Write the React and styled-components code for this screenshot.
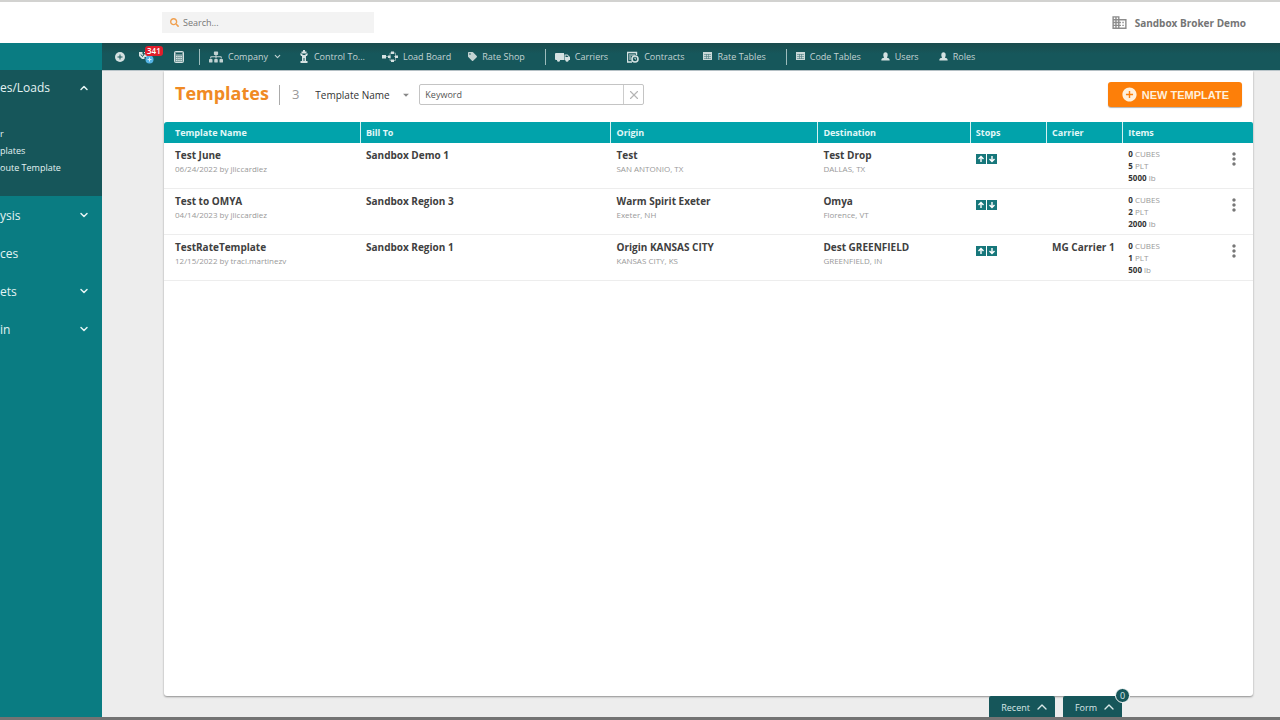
import styled, { createGlobalStyle } from "styled-components";
import { FaSearch, FaSitemap, FaTag } from "react-icons/fa";
import {
  MdAddCircle,
  MdArrowDropDown,
  MdBusiness,
  MdMoreVert,
} from "react-icons/md";
import { ChevronDown, ChevronUp, X } from "lucide-react";

const GlobalStyle = createGlobalStyle`
  * {
    box-sizing: border-box;
  }
  body {
    margin: 0;
    font-family: "Open Sans", "Noto Sans", sans-serif;
    color: #333;
  }
  button, input, select {
    font-family: inherit;
    margin: 0;
  }
  svg {
    display: block;
    flex-shrink: 0;
  }
`;

const Page = styled.div`
  display: flex;
  flex-direction: column;
  height: 100vh;
  overflow: hidden;
  background-color: #ededed;
  border-top: 2px solid #d2d2d0;
  border-bottom: 3px solid #737373;
`;
const TopBar = styled.header`
  display: flex;
  align-items: center;
  justify-content: space-between;
  flex-shrink: 0;
  height: 41px;
  padding: 0 34px 0 162px;
  background-color: #fff;
`;
const SearchBox = styled.label`
  display: flex;
  align-items: center;
  gap: 4px;
  width: 212px;
  height: 21px;
  padding: 0 8px;
  background-color: #f3f3f3;
  color: #f0a050;
`;
const SearchInput = styled.input`
  flex: 1;
  min-width: 0;
  padding: 0;
  border: 0;
  background: transparent;
  font-size: 9px;
  color: #555;
  outline: none;
  &::placeholder {
    color: #777;
    opacity: 1;
  }
`;
const Account = styled.div`
  display: flex;
  align-items: center;
  gap: 7px;
  font-size: 10px;
  font-weight: 700;
  color: #757575;
  svg {
    color: #8c8c8c;
  }
`;
const Body = styled.div`
  display: flex;
  flex: 1;
  min-height: 0;
`;
const Sidebar = styled.aside`
  width: 102px;
  flex-shrink: 0;
  padding-top: 27px;
  background-color: #0a7c82;
  color: #e4f3f3;
`;
const OpenSection = styled.section`
  height: 126px;
  background-color: #16565a;
`;
const SideButton = styled.button`
  display: flex;
  align-items: center;
  justify-content: space-between;
  width: 100%;
  height: ${(props) => (props.$open ? 35 : 38)}px;
  padding: 0 12px 0 0;
  border: 0;
  background: transparent;
  color: inherit;
  font-size: 12px;
  text-align: left;
  cursor: pointer;
`;
const SubLinks = styled.nav`
  display: flex;
  flex-direction: column;
  padding-top: 20px;
`;
const SubLink = styled.a`
  font-size: 9px;
  line-height: 17px;
  color: #e4f3f3;
  text-decoration: none;
  white-space: nowrap;
`;
const Main = styled.main`
  display: flex;
  flex-direction: column;
  flex: 1;
  min-width: 0;
`;
const NavBar = styled.nav`
  display: flex;
  align-items: center;
  flex-shrink: 0;
  height: 27px;
  padding-left: 12px;
  background: linear-gradient(#1a4b4d, #16575b 40%);
  color: #d5e2e2;
`;
const IconButton = styled.button`
  position: relative;
  display: flex;
  align-items: center;
  justify-content: ${(props) => props.$align || "center"};
  width: ${(props) => props.$width || 12}px;
  height: ${(props) => props.$height || 18}px;
  padding: 0;
  border: 0;
  background: transparent;
  color: inherit;
  cursor: pointer;
`;
const Badge = styled.span`
  position: absolute;
  top: -2px;
  left: 6px;
  padding: 0 2px;
  border-radius: 3px;
  background-color: #e01e2b;
  color: #fff;
  font-size: 8px;
  font-weight: 600;
  line-height: 10px;
`;
const IconGroup = styled.div`
  display: flex;
  gap: 13px;
  padding-right: 14px;
`;
const NavGroup = styled.div`
  display: flex;
  align-items: center;
  gap: ${(props) => props.$gap}px;
  height: 16px;
  padding: 0 20px 0 9px;
  border-left: 1px solid #9dbcbc;
`;
const NavLink = styled.a`
  display: flex;
  align-items: center;
  gap: 5px;
  color: #c3d3d3;
  font-size: 9px;
  line-height: 12px;
  text-decoration: none;
  white-space: nowrap;
`;
const Content = styled.div`
  display: flex;
  flex-direction: column;
  flex: 1;
  min-height: 0;
  padding: 0 27px 0 62px;
  border-top: 1px solid #b9c4c9;
`;
const Panel = styled.section`
  flex: 1;
  min-height: 0;
  border-radius: 0 0 3px 3px;
  background-color: #fff;
  box-shadow: 0 1px 2px rgba(0, 0, 0, 0.4);
`;
const Toolbar = styled.div`
  display: flex;
  align-items: center;
  height: 51px;
  padding: 0 11px 4px;
`;
const Title = styled.h1`
  margin: 0;
  padding: 0 10px 4px 0;
  border-right: 1px solid #aaa;
  font-size: 18px;
  line-height: 16px;
  color: #f08a24;
`;
const Count = styled.span`
  padding: 0 16px 2px 12px;
  font-size: 13px;
  line-height: 18px;
  color: #999;
`;
const SelectWrap = styled.label`
  display: flex;
  align-items: center;
  justify-content: space-between;
  width: 98px;
  margin-right: 6px;
  color: #888;
`;
const Select = styled.select`
  flex: 1;
  min-width: 0;
  padding: 0;
  border: 0;
  appearance: none;
  background: transparent;
  font-size: 10px;
  color: #333;
  outline: none;
`;
const KeywordBox = styled.div`
  display: flex;
  width: 225px;
  height: 21px;
  border: 1px solid #c4c4c4;
  border-radius: 2px;
`;
const KeywordInput = styled.input`
  flex: 1;
  min-width: 0;
  padding: 0 5px;
  border: 0;
  background: transparent;
  font-size: 9px;
  outline: none;
  &::placeholder {
    color: #555;
    opacity: 1;
  }
`;
const ClearButton = styled.button`
  display: flex;
  align-items: center;
  justify-content: center;
  width: 20px;
  padding: 0;
  border: 0;
  border-left: 1px solid #ccc;
  background: transparent;
  color: #b5b5b5;
  cursor: pointer;
`;
const NewButton = styled.button`
  display: flex;
  align-items: center;
  gap: 4px;
  height: 25px;
  margin-left: auto;
  padding: 0 13px;
  border: 0;
  border-radius: 3px;
  background-color: #fd7f09;
  box-shadow: 0 1px 1px rgba(0, 0, 0, 0.3);
  color: #fff0dc;
  font-family: "Liberation Sans", Arial, sans-serif;
  font-size: 11px;
  font-weight: bold;
  cursor: pointer;
`;
const Table = styled.table`
  width: 100%;
  table-layout: fixed;
  border-collapse: separate;
  border-spacing: 0;
`;
const Th = styled.th`
  width: ${(props) => props.$width};
  height: 21px;
  padding: 0 0 0 ${(props) => (props.$first ? 11 : 5)}px;
  border-left: ${(props) => (props.$first ? 0 : 1)}px solid #d5f1f1;
  background-color: #01a3ab;
  color: #e3f8f8;
  font-size: 9px;
  line-height: 12px;
  text-align: left;
  &:first-child {
    border-top-left-radius: 3px;
  }
  &:last-child {
    border-top-right-radius: 2px;
  }
`;
const Td = styled.td`
  height: 46px;
  padding: 5px 0 0 ${(props) => (props.$first ? 11 : 6)}px;
  border-bottom: 1px solid #ededed;
  vertical-align: top;
  white-space: nowrap;
`;
const Name = styled.div`
  font-size: 10px;
  font-weight: 700;
  line-height: 15px;
  color: #404040;
`;
const Detail = styled.div`
  font-size: 8px;
  line-height: 12px;
  color: #999;
`;
const Stops = styled.div`
  display: flex;
  gap: 1px;
  padding-top: 6px;
`;
const ItemsCell = styled.div`
  display: flex;
  justify-content: space-between;
  padding-right: 11px;
`;
const Amount = styled.b`
  color: #333;
`;
const BottomTabs = styled.footer`
  display: flex;
  justify-content: flex-end;
  gap: 8px;
  height: 21px;
  margin-right: 131px;
`;
const BottomTab = styled.button`
  position: relative;
  display: flex;
  align-items: center;
  gap: 4px;
  padding: 1px 5px 0 12px;
  border: 0;
  border-radius: 2px 2px 0 0;
  background-color: #16565a;
  color: #d9e8e8;
  font-size: 9px;
  cursor: pointer;
`;
const TabCount = styled.span`
  position: absolute;
  top: -8px;
  right: -8px;
  width: 15px;
  height: 15px;
  border: 1px solid #fff;
  border-radius: 50%;
  background-color: #16565a;
  font-size: 9px;
  line-height: 13px;
  text-align: center;
`;

function AddIcon() {
  return (
    <svg width="10" height="10" viewBox="0 0 10 10">
      <circle cx="5" cy="5" r="5" fill="#d5e2e2" />
      <path d="M5 2.5v5M2.5 5h5" stroke="#16575b" strokeWidth="1" />
    </svg>
  );
}

function InboxIcon() {
  return (
    <svg width="17" height="14" viewBox="0 0 17 14">
      <path d="M0 2h3.5v2l2 1V9H3L0 6z" fill="#d5e2e2" />
      <path d="M5 2h3v5H5z" fill="#d5e2e2" />
      <path d="M2 4.5l1.5 2L6 3" stroke="#16575b" fill="none" />
      <circle cx="10.500" cy="9.500" r="4" fill="#56b4e6" />
      <path d="M8.500 9.500h4M10.500 7.500v4" stroke="#d9f1ff" />
    </svg>
  );
}

function CalculatorIcon() {
  return (
    <svg width="10" height="12" viewBox="0 0 10 12">
      <rect x="0.500" y="0.500" width="9" height="11" rx="1" fill="#7fa1a2" stroke="#d5e2e2" />
      <path d="M2 2.500h6" stroke="#16575b" strokeWidth="1.400" />
      <path
        d="M2 5.500h6M2 7.500h6M2 9.500h6"
        stroke="#d5e2e2"
        strokeWidth="1.200"
        strokeDasharray="1.500 0.700"
      />
    </svg>
  );
}

function TowerIcon() {
  return (
    <svg width="10" height="13" viewBox="0 0 10 13" fill="#d5e2e2">
      <path d="M4 0h2v1.500h1.500V3h-5V1.500H4zM1 3.500h8L8 6H2zM3 6h4v5h1.500v2h-7v-2H3z" />
      <path d="M3.500 4h3v1h-3zM4.500 8h1v3h-1z" fill="#16575b" />
    </svg>
  );
}

function LoadBoardIcon() {
  return (
    <svg width="16" height="12" viewBox="0 0 16 12">
      <path d="M4 5.500h3M9 2H8v7.500h2M12 5.500h2M11 2h2.500v7.500H11" fill="none" stroke="#7fa1a2" />
      <path
        d="M0 4h4v3.500H0zM6 4.500h2.500v2.500H6zM9 .5h3V3H9zM9 8.500h3V11H9zM13 4.500h3v2.500h-3z"
        fill="#d5e2e2"
      />
    </svg>
  );
}

function TruckIcon() {
  return (
    <svg width="15" height="10" viewBox="0 0 15 10" fill="#d5e2e2">
      <path d="M1 1h8v7H1a1 1 0 0 1-1-1V2a1 1 0 0 1 1-1zM9.500 2.500h3L15 5v3H9.500z" />
      <path d="M10.500 3.500h1.700L13.500 5h-3z" fill="#16575b" />
      <circle cx="3.500" cy="8.300" r="1.500" />
      <circle cx="12" cy="8.300" r="1.500" />
    </svg>
  );
}

function ContractIcon() {
  return (
    <svg width="12" height="12" viewBox="0 0 12 12" fill="none" stroke="#d5e2e2">
      <path d="M9.500 4V1.500h-9v9.500H5M.5 1.500h9" strokeWidth="1.400" />
      <path d="M2 4h6M2 6h2M2 8h2" />
      <circle cx="8" cy="8" r="3" strokeWidth="1.600" />
      <path d="M8 6.500V8h1" />
    </svg>
  );
}

function TableIcon() {
  return (
    <svg width="9" height="9" viewBox="0 0 9 9">
      <rect width="9" height="8" fill="#c9d8d8" />
      <path d="M1 2.500h7M1 4.500h7M1 6.500h7M3.500 2v5M5.500 2v5" stroke="#4c7e81" strokeWidth="0.600" />
    </svg>
  );
}

function UserIcon() {
  return (
    <svg width="9" height="9" viewBox="0 0 9 9" fill="#d5e2e2">
      <ellipse cx="4.500" cy="3" rx="2.200" ry="2.700" />
      <path d="M.3 8.500C.3 6.500 1.300 6 3 5.700V5h3v.7c1.700.3 2.700.8 2.700 2.800z" />
    </svg>
  );
}

function StopIcon({ down }) {
  return (
    <svg width="10" height="10" viewBox="0 0 10 10">
      <rect width="10" height="10" fill="#17777b" />
      <path
        d={down ? "M5 2v5.500M2.500 5L5 7.500 7.500 5" : "M5 8V2.500M2.500 5L5 2.500 7.500 5"}
        fill="none"
        stroke="#fff"
        strokeWidth="1.400"
      />
    </svg>
  );
}

const navGroups = [
  {
    gap: 17,
    links: [
      { label: "Company", icon: <FaSitemap size={14} />, menu: true },
      { label: "Control To...", icon: <TowerIcon /> },
      { label: "Load Board", icon: <LoadBoardIcon /> },
      { label: "Rate Shop", icon: <FaTag size={9} /> },
    ],
  },
  {
    gap: 19,
    links: [
      { label: "Carriers", icon: <TruckIcon /> },
      { label: "Contracts", icon: <ContractIcon /> },
      { label: "Rate Tables", icon: <TableIcon /> },
    ],
  },
  {
    gap: 20,
    links: [
      { label: "Code Tables", icon: <TableIcon /> },
      { label: "Users", icon: <UserIcon /> },
      { label: "Roles", icon: <UserIcon /> },
    ],
  },
];

const columns = [
  ["Template Name", "18%"],
  ["Bill To", "23%"],
  ["Origin", "19%"],
  ["Destination", "14%"],
  ["Stops", "7%"],
  ["Carrier", "7%"],
  ["Items", "12%"],
];

const templates = [
  {
    name: "Test June",
    created: "06/24/2022 by jliccardiez",
    billTo: "Sandbox Demo 1",
    origin: ["Test", "SAN ANTONIO, TX"],
    destination: ["Test Drop", "DALLAS, TX"],
    carrier: "",
    items: [0, 5, 5000],
  },
  {
    name: "Test to OMYA",
    created: "04/14/2023 by jliccardiez",
    billTo: "Sandbox Region 3",
    origin: ["Warm Spirit Exeter", "Exeter, NH"],
    destination: ["Omya", "Florence, VT"],
    carrier: "",
    items: [0, 2, 2000],
  },
  {
    name: "TestRateTemplate",
    created: "12/15/2022 by traci.martinezv",
    billTo: "Sandbox Region 1",
    origin: ["Origin KANSAS CITY", "KANSAS CITY, KS"],
    destination: ["Dest GREENFIELD", "GREENFIELD, IN"],
    carrier: "MG Carrier 1",
    items: [0, 1, 500],
  },
];

const units = ["CUBES", "PLT", "lb"];

const sections = [
  { label: "ysis", menu: true },
  { label: "ces" },
  { label: "ets", menu: true },
  { label: "in", menu: true },
];

export default function App() {
  return (
    <Page>
      <GlobalStyle />
      <TopBar>
        <SearchBox>
          <FaSearch size={9} />
          <SearchInput type="text" placeholder="Search..." aria-label="Search" />
        </SearchBox>
        <Account>
          <MdBusiness size={17} />
          Sandbox Broker Demo
        </Account>
      </TopBar>
      <Body>
        <Sidebar>
          <OpenSection>
            <SideButton $open>
              es/Loads
              <ChevronUp size={12} strokeWidth={3} />
            </SideButton>
            <SubLinks>
              <SubLink href="#">r</SubLink>
              <SubLink href="#">plates</SubLink>
              <SubLink href="#">oute Template</SubLink>
            </SubLinks>
          </OpenSection>
          {sections.map((section) => (
            <SideButton key={section.label}>
              {section.label}
              {section.menu && <ChevronDown size={12} strokeWidth={3} />}
            </SideButton>
          ))}
        </Sidebar>
        <Main>
          <NavBar>
            <IconGroup>
              <IconButton aria-label="Add">
                <AddIcon />
              </IconButton>
              <IconButton aria-label="Messages" $width={21} $align="flex-start">
                <InboxIcon />
                <Badge>341</Badge>
              </IconButton>
              <IconButton aria-label="Calculator">
                <CalculatorIcon />
              </IconButton>
            </IconGroup>
            {navGroups.map((group) => (
              <NavGroup key={group.links[0].label} $gap={group.gap}>
                {group.links.map((item) => (
                  <NavLink key={item.label} href="#">
                    {item.icon}
                    {item.label}
                    {item.menu && <ChevronDown size={9} strokeWidth={3} />}
                  </NavLink>
                ))}
              </NavGroup>
            ))}
          </NavBar>
          <Content>
            <Panel>
              <Toolbar>
                <Title>Templates</Title>
                <Count>3</Count>
                <SelectWrap>
                  <Select aria-label="Search by">
                    <option>Template Name</option>
                  </Select>
                  <MdArrowDropDown size={14} />
                </SelectWrap>
                <KeywordBox>
                  <KeywordInput type="text" placeholder="Keyword" aria-label="Keyword" />
                  <ClearButton aria-label="Clear">
                    <X size={14} strokeWidth={2} />
                  </ClearButton>
                </KeywordBox>
                <NewButton>
                  <MdAddCircle size={17} />
                  NEW TEMPLATE
                </NewButton>
              </Toolbar>
              <Table>
                <thead>
                  <tr>
                    {columns.map(([label, width], i) => (
                      <Th key={label} $width={width} $first={i === 0}>
                        {label}
                      </Th>
                    ))}
                  </tr>
                </thead>
                <tbody>
                  {templates.map((row) => (
                    <tr key={row.name}>
                      <Td $first>
                        <Name>{row.name}</Name>
                        <Detail>{row.created}</Detail>
                      </Td>
                      <Td>
                        <Name>{row.billTo}</Name>
                      </Td>
                      <Td>
                        <Name>{row.origin[0]}</Name>
                        <Detail>{row.origin[1]}</Detail>
                      </Td>
                      <Td>
                        <Name>{row.destination[0]}</Name>
                        <Detail>{row.destination[1]}</Detail>
                      </Td>
                      <Td>
                        <Stops>
                          <StopIcon />
                          <StopIcon down />
                        </Stops>
                      </Td>
                      <Td>
                        <Name>{row.carrier}</Name>
                      </Td>
                      <Td>
                        <ItemsCell>
                          <div>
                            {row.items.map((amount, i) => (
                              <Detail key={units[i]}>
                                <Amount>{amount}</Amount> {units[i]}
                              </Detail>
                            ))}
                          </div>
                          <IconButton aria-label="More actions" $width={16} $height={22}>
                            <MdMoreVert size={20} color="#777" />
                          </IconButton>
                        </ItemsCell>
                      </Td>
                    </tr>
                  ))}
                </tbody>
              </Table>
            </Panel>
            <BottomTabs>
              <BottomTab>
                Recent
                <ChevronUp size={16} />
              </BottomTab>
              <BottomTab>
                Form
                <ChevronUp size={16} />
                <TabCount>0</TabCount>
              </BottomTab>
            </BottomTabs>
          </Content>
        </Main>
      </Body>
    </Page>
  );
}
